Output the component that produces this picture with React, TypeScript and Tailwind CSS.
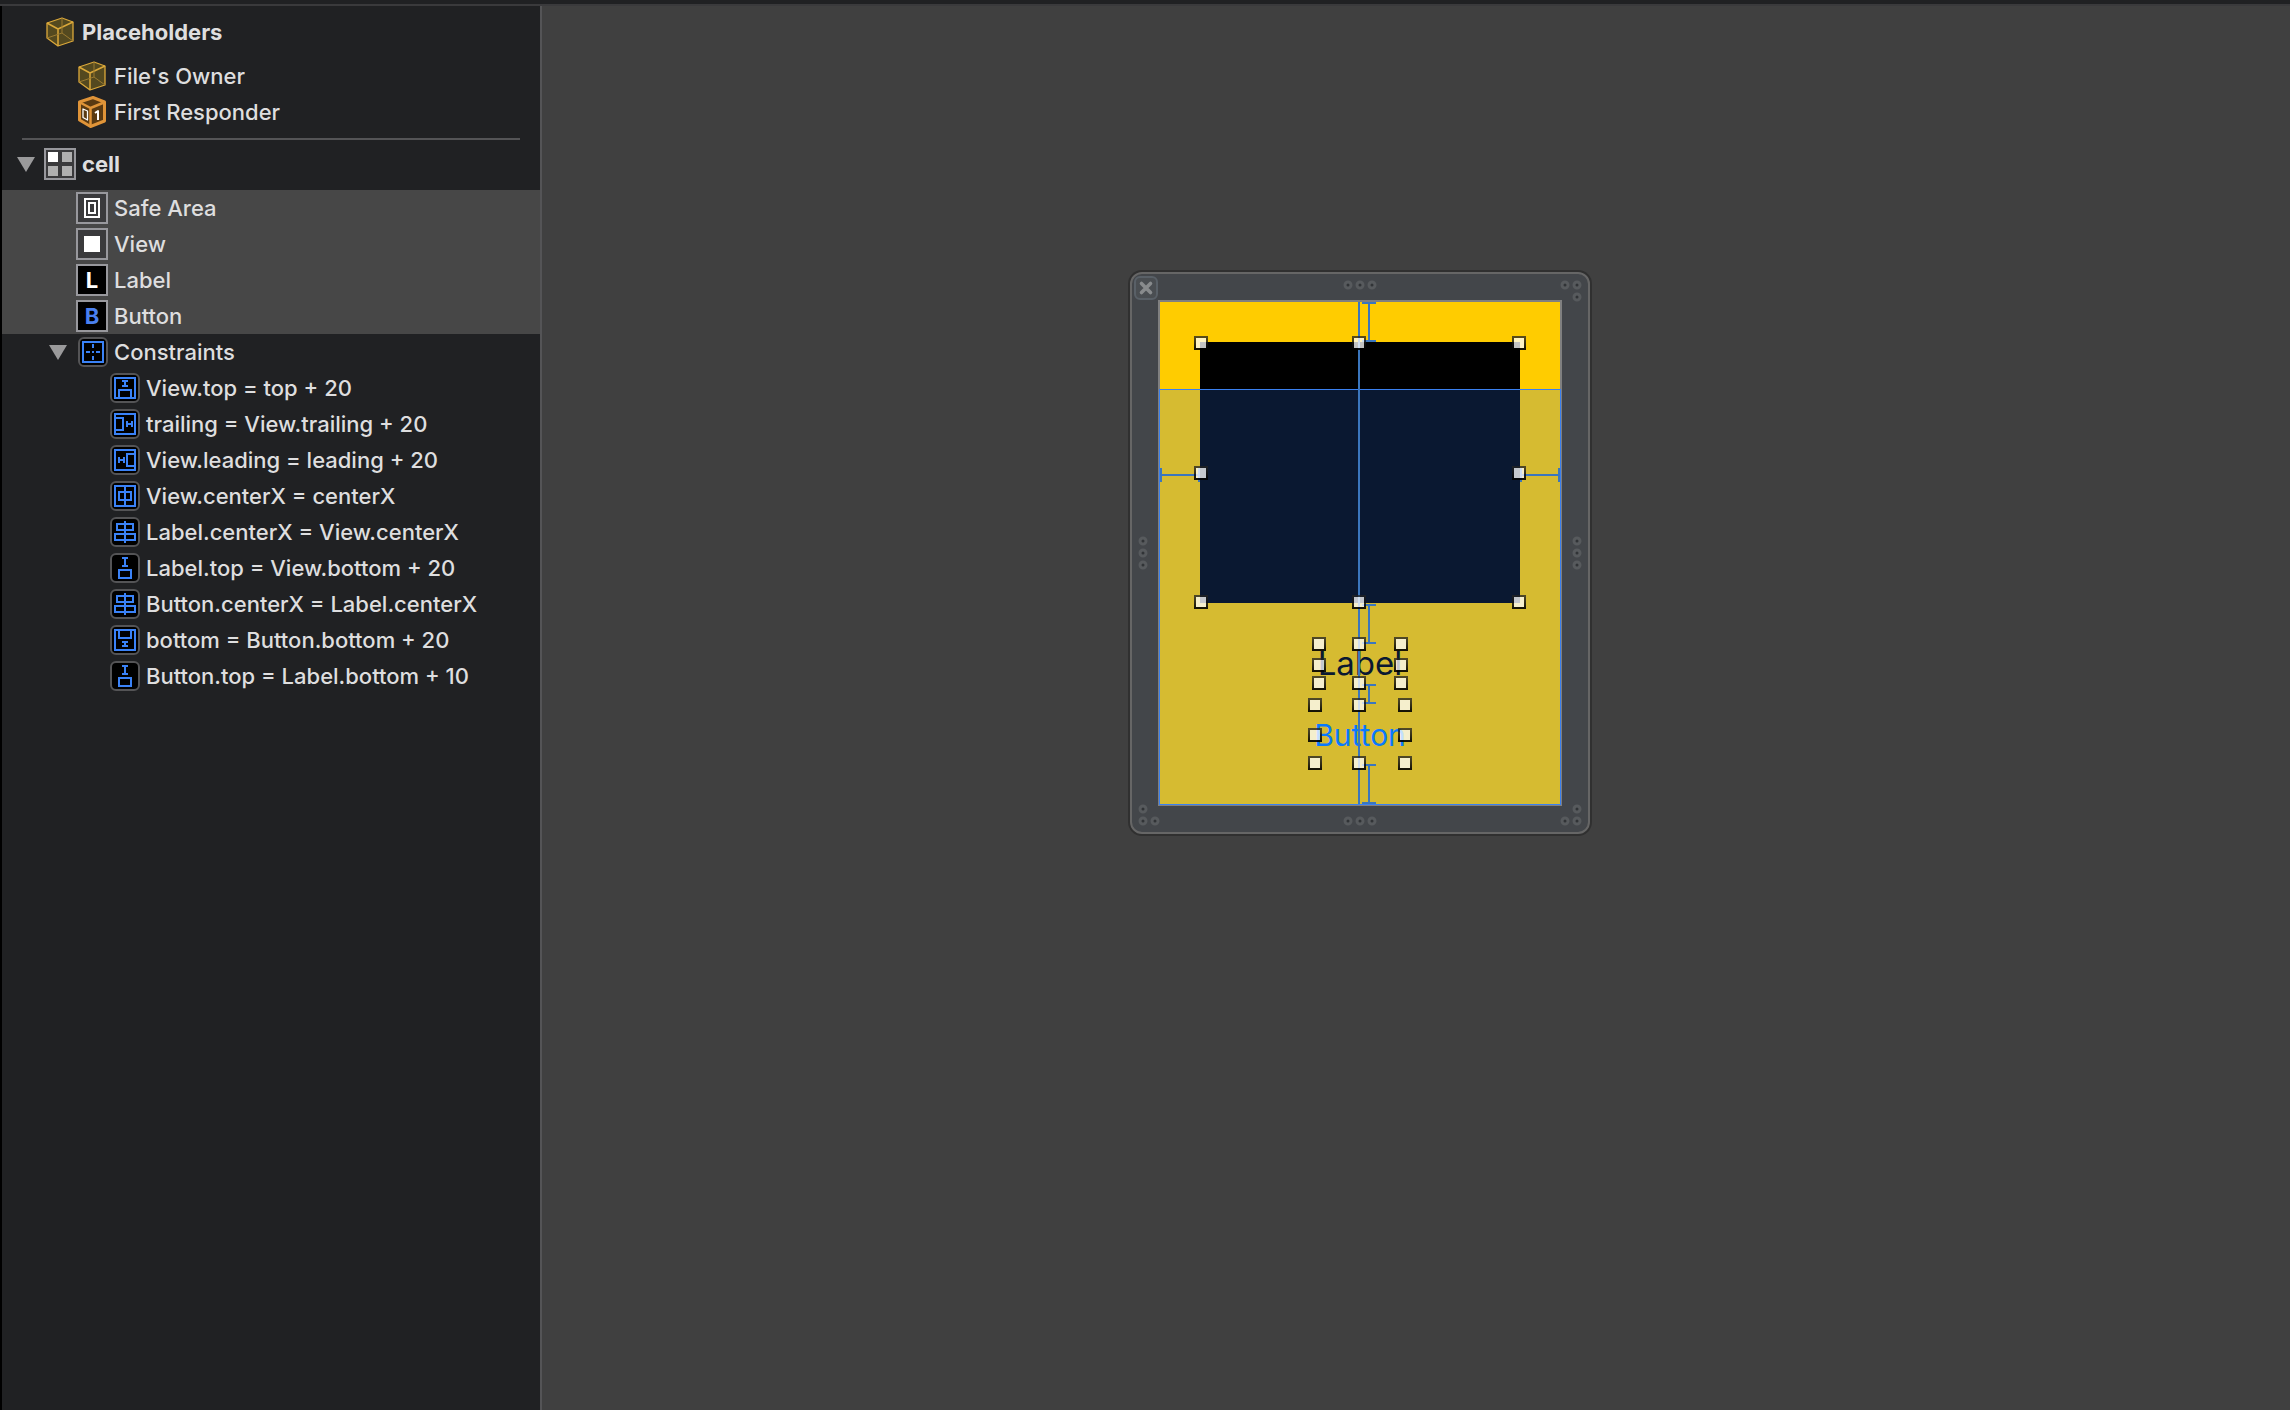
import React from 'react';

type Point = [number, number];

function Cube() {
  return (
    <svg width="28" height="30" viewBox="0 0 28 30" fill="none" stroke="#dba83a" strokeLinejoin="round">
      <path d="M1 6 16 1 27 5V24L12 29 1 21Z" fill="#54491f" strokeWidth="1.3" />
      <path d="M1 6 12 12 27 5M12 12V29" strokeWidth="1.5" />
      <path d="M16 1V16M16 16 1 21M16 16 27 24" stroke="#9b7a30" strokeWidth="1" />
    </svg>
  );
}

function ResponderCube() {
  return (
    <svg width="28" height="32" viewBox="0 0 28 32" fill="none" strokeLinejoin="round">
      <path d="M1.5 6 15 1.5 26.5 6V25L12.5 30.5 1.5 24Z" fill="#5a3a12" stroke="#e09438" strokeWidth="3" />
      <path d="M2 6.5 12.5 12 26 6.5M12.5 12V30" stroke="#e09438" strokeWidth="2.5" />
      <path d="M5 13 9.5 15V24L5 21.5Z" stroke="#fff" strokeWidth="1.3" />
      <path d="M17 17 20 15V24" stroke="#fff" strokeWidth="2" />
    </svg>
  );
}

function CellIcon() {
  return (
    <svg width="32" height="32" viewBox="0 0 32 32" shapeRendering="crispEdges">
      <rect x="1" y="1" width="30" height="30" fill="#3a3a3c" stroke="#98989d" strokeWidth="2" />
      <rect x="4" y="4" width="10" height="10" fill="#fff" />
      <rect x="18" y="4" width="10" height="10" fill="#b0b0b0" />
      <rect x="4" y="18" width="10" height="10" fill="#b0b0b0" />
      <rect x="18" y="18" width="10" height="10" fill="#b0b0b0" />
    </svg>
  );
}

function SafeAreaIcon() {
  return (
    <svg width="32" height="32" viewBox="0 0 32 32" fill="none" strokeWidth="2" shapeRendering="crispEdges">
      <rect x="1" y="1" width="30" height="30" fill="#3a3a3c" stroke="#98989d" />
      <rect x="9" y="7" width="14" height="18" stroke="#fff" />
      <rect x="13" y="11" width="6" height="10" stroke="#fff" />
    </svg>
  );
}

function ViewIcon() {
  return (
    <svg width="32" height="32" viewBox="0 0 32 32" shapeRendering="crispEdges">
      <rect x="1" y="1" width="30" height="30" fill="#3a3a3c" stroke="#98989d" strokeWidth="2" />
      <rect x="8" y="8" width="16" height="16" fill="#fff" />
    </svg>
  );
}

function LetterIcon({ letter, className }: { letter: string; className: string }) {
  return (
    <span className={`flex size-8 items-center justify-center border-2 border-[#98989d] bg-black text-[22px] leading-7 font-bold ${className}`}>
      {letter}
    </span>
  );
}

const glyphs = {
  group: 'M5 5H25V25H5ZM15 7V11M15 14V16M15 19V23M8 15H12M14 15H16M18 15H22',
  top: 'M5 5H25V25H5ZM12 8H18M12 13H18M15 8V13M9 25V17H21V25',
  trailing: 'M5 5H25V25H5ZM5 9H13V21H5M17 12V18M22 12V18M17 15H22',
  leading: 'M5 5H25V25H5ZM25 9H17V21H25M9 12V18M14 12V18M9 15H14',
  center: 'M5 5H25V25H5ZM9 11H21V19H9ZM15 5V25',
  align: 'M7 7H23V13H7ZM5 17H25V23H5ZM15 4V26',
  spacing: 'M12 5H18M12 13H18M15 5V13M9 17H21V25H9Z',
  bottom: 'M5 5H25V25H5ZM9 5V13H21V5M12 17H18M12 21H18M15 17V21',
};

function ConstraintIcon({ kind }: { kind: keyof typeof glyphs }) {
  return (
    <svg width="30" height="30" viewBox="0 0 30 30" fill="none">
      <rect x="1" y="1" width="28" height="28" rx="5" fill="#000" stroke="#545456" strokeWidth="2" />
      <path d={glyphs[kind]} stroke="#3a82f7" strokeWidth="2" shapeRendering="crispEdges" />
    </svg>
  );
}

function Disclosure({ label }: { label: string }) {
  return (
    <button type="button" aria-label={label} aria-expanded="true" className="flex w-[18px] shrink-0">
      <svg width="18" height="15" viewBox="0 0 18 15">
        <path d="M0 0H18L9 15Z" fill="#9a9a9b" />
      </svg>
    </button>
  );
}

const constraints: { kind: keyof typeof glyphs; text: string }[] = [
  { kind: 'top', text: 'View.top = top + 20' },
  { kind: 'trailing', text: 'trailing = View.trailing + 20' },
  { kind: 'leading', text: 'View.leading = leading + 20' },
  { kind: 'center', text: 'View.centerX = centerX' },
  { kind: 'align', text: 'Label.centerX = View.centerX' },
  { kind: 'spacing', text: 'Label.top = View.bottom + 20' },
  { kind: 'align', text: 'Button.centerX = Label.centerX' },
  { kind: 'bottom', text: 'bottom = Button.bottom + 20' },
  { kind: 'spacing', text: 'Button.top = Label.bottom + 10' },
];

const selected = [
  { icon: <SafeAreaIcon />, text: 'Safe Area' },
  { icon: <ViewIcon />, text: 'View' },
  { icon: <LetterIcon letter="L" className="text-white" />, text: 'Label' },
  { icon: <LetterIcon letter="B" className="text-[#4a80f0]" />, text: 'Button' },
];

function Outline() {
  return (
    <nav aria-label="Document outline" className="w-[542px] shrink-0 border-r-2 border-l-2 border-l-black border-r-[#545456] bg-[#202123] text-[22px] leading-7 font-medium text-[#dededf]">
      <h2 className="flex h-[52px] items-center gap-2 pl-11 font-bold">
        <Cube />
        Placeholders
      </h2>
      <ul>
        <li className="flex h-9 items-center gap-2 pl-[76px]">
          <Cube />
          File's Owner
        </li>
        <li className="flex h-9 items-center gap-2 pl-[76px]">
          <ResponderCube />
          First Responder
        </li>
      </ul>
      <hr className="mx-5 mt-2 border-t-2 border-[#545456]" />
      <h2 className="flex items-center pt-2 pb-[10px] pl-[15px] font-bold">
        <Disclosure label="Toggle cell" />
        <span className="flex items-center gap-1.5 pl-[9px]">
          <CellIcon />
          cell
        </span>
      </h2>
      <ul className="bg-[#474747]">
        {selected.map((item) => (
          <li key={item.text} className="flex h-9 items-center gap-1.5 pl-[74px]">
            {item.icon}
            {item.text}
          </li>
        ))}
      </ul>
      <div className="flex h-9 items-center pl-[47px]">
        <Disclosure label="Toggle constraints" />
        <span className="flex items-center gap-1.5 pl-[11px]">
          <ConstraintIcon kind="group" />
          Constraints
        </span>
      </div>
      <ul>
        {constraints.map((item) => (
          <li key={item.text} className="flex h-9 items-center gap-1.5 pl-[108px]">
            <ConstraintIcon kind={item.kind} />
            {item.text}
          </li>
        ))}
      </ul>
    </nav>
  );
}

// grip dots around the resizable cell frame
const grips: Point[] = [
  [216, 11], [228, 11], [240, 11],
  [433, 11], [445, 11], [445, 23],
  [11, 267], [11, 279], [11, 291],
  [445, 267], [445, 279], [445, 291],
  [216, 547], [228, 547], [240, 547],
  [11, 535], [11, 547], [23, 547],
  [445, 535], [445, 547], [433, 547],
];

// centre points of the selection handles
const handles: Point[] = [
  [41, 41], [199, 41], [359, 41], [41, 171], [359, 171], [41, 300], [199, 300], [359, 300],
  [159, 342], [199, 342], [241, 342], [159, 363], [241, 363], [159, 381], [199, 381], [241, 381],
  [155, 403], [199, 403], [245, 403], [155, 433], [245, 433], [155, 461], [199, 461], [245, 461],
];

const verticalGaps: Point[] = [[1, 39], [303, 341], [383, 401], [463, 501]];
const horizontalGaps: Point[] = [[1, 39], [361, 399]];

function Guides() {
  return (
    <svg className="pointer-events-none absolute inset-0 overflow-visible" width="400" height="502" viewBox="0 0 400 502" fill="none">
      <defs>
        <linearGradient id="handle-edge" x1="0" y1="0" x2="0" y2="1">
          <stop offset="0" stopColor="#222" stopOpacity="0.75" />
          <stop offset="1" stopColor="#000" stopOpacity="0.9" />
        </linearGradient>
      </defs>
      <g stroke="#3b76bd" strokeWidth="2">
        <path d="M199 0V502" />
        {verticalGaps.map(([a, b]) => (
          <path key={a} d={`M202 ${a}H216M202 ${b}H216M209 ${a}V${b}`} />
        ))}
        {horizontalGaps.map(([a, b]) => (
          <path key={a} d={`M${a} 166V180M${b} 166V180M${a} 173H${b}`} />
        ))}
      </g>
      {handles.map(([x, y]) => (
        <g key={`${x}-${y}`}>
          <rect x={x - 5} y={y - 5} width="10" height="10" fill="#fff" fillOpacity="0.76" />
          <rect x={x - 6} y={y - 6} width="12" height="12" stroke="url(#handle-edge)" strokeWidth="2" />
        </g>
      ))}
    </svg>
  );
}

function CellFrame() {
  return (
    <div className="absolute top-[266px] left-[588px] rounded-xl border-2 border-[#666] bg-[#43464a] p-[26px] ring-2 ring-[#303030]">
      <button type="button" aria-label="Close" className="absolute top-0.5 left-0.5">
        <svg width="24" height="24" viewBox="0 0 24 24">
          <rect x="1" y="1" width="22" height="22" rx="5" fill="#4a4e52" stroke="#596067" strokeWidth="2" />
          <path d="M7.5 7.5 16.5 16.5M16.5 7.5 7.5 16.5" stroke="#888b8d" strokeWidth="3.6" strokeLinecap="round" />
        </svg>
      </button>
      <svg className="pointer-events-none absolute inset-0" width="456" height="558" viewBox="0 0 456 558">
        {grips.map(([x, y]) => (
          <circle key={`${x}-${y}`} cx={x} cy={y} r="3" fill="#303336" stroke="#575a5d" strokeWidth="3" />
        ))}
      </svg>
      <div className="relative h-[506px] w-[404px] border-2 border-[#808080] bg-[#ffcc00]">
        <div className="flex flex-col items-center pt-10">
          <div className="h-[261px] w-80 bg-black" />
          <span className="mt-10 text-[33px] leading-10 text-black">Label</span>
          <button type="button" className="mt-5 h-16 text-[30px] leading-10 text-[#007aff]">Button</button>
        </div>
        <div className="pointer-events-none absolute top-[87px] -right-px -bottom-px -left-px border border-[#3a80f0] bg-[#307af4]/20" />
        <Guides />
      </div>
    </div>
  );
}

export default function App() {
  return (
    <div className="flex min-h-screen flex-col bg-[#404040] font-['Inter','Liberation_Sans',sans-serif]">
      <div className="h-1.5 border-b-2 border-[#3a3a3c] bg-[#202123]" />
      <div className="flex grow">
        <Outline />
        <main className="relative min-w-0 grow">
          <CellFrame />
        </main>
      </div>
    </div>
  );
}
